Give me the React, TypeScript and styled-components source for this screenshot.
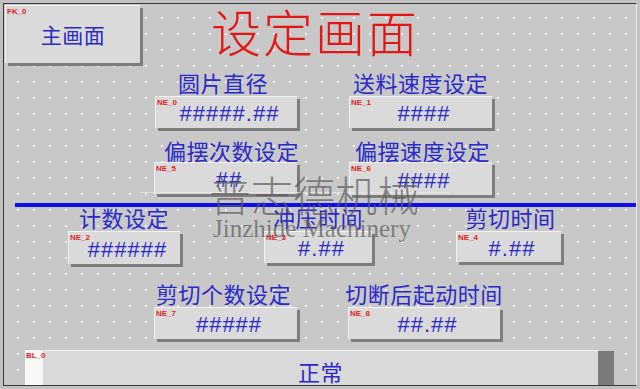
import { createGlobalStyle, styled } from 'styled-components'

const GlobalStyle = createGlobalStyle`
  html, body {
    margin: 0;
    padding: 0;
    background: #bdbdbd;
  }
  body {
    font-family: 'Noto Sans CJK SC', 'Noto Sans', sans-serif;
  }
`

const BLUE = '#2a2ac8'

const Frame = styled.div`
  width: 640px;
  height: 389px;
  box-sizing: border-box;
  padding: 3px;
  background: #c2c2c2;
`

// HMI editor canvas with its dotted design grid
const Screen = styled.div`
  position: relative;
  display: flex;
  flex-direction: column;
  width: 100%;
  height: 100%;
  box-sizing: border-box;
  padding-top: 1px;
  border-left: 1px solid #3a3a3a;
  border-top: 1px solid #3a3a3a;
  border-bottom: 1px solid #3a3a3a;
  border-right: 1px solid #ececec;
  background-color: #c8c8c8;
  background-image: radial-gradient(circle, rgba(242, 242, 242, 0.95) 0.8px, transparent 1.4px);
  background-size: 16px 16px;
  background-position: -10px -10px;
`

const Header = styled.div`
  display: flex;
  align-items: flex-start;
  height: 58px;
  padding-left: 1px;
`

const Key = styled.div<{ $w: number; $h: number }>`
  position: relative;
  flex: none;
  width: ${({ $w }) => $w}px;
  height: ${({ $h }) => $h}px;
  box-sizing: border-box;
  background: #dadada;
  border-top: 1px solid #f2f2f2;
  border-left: 1px solid #f2f2f2;
  box-shadow: 3px 3px 0 #7d7d7d;
  display: flex;
  align-items: center;
  justify-content: center;
`

const Tag = styled.span`
  position: absolute;
  left: 1px;
  top: 2px;
  font-family: 'Liberation Sans', Arial, sans-serif;
  font-size: 8px;
  font-weight: 700;
  line-height: 1;
  color: #e41e1e;
`

const Caption = styled.span<{ $size?: number }>`
  font-size: ${({ $size }) => $size ?? 22}px;
  line-height: 1;
  color: ${BLUE};
  letter-spacing: 0.5px;
  white-space: nowrap;
`

const Title = styled.h1`
  margin: -1px 0 0 71px;
  font-size: 50px;
  line-height: 52px;
  font-weight: 300;
  color: #e31616;
  letter-spacing: 2px;
  white-space: nowrap;
`

const Row = styled.div<{ $top: number; $left: number; $gap: number }>`
  display: flex;
  align-items: flex-start;
  margin-top: ${({ $top }) => $top}px;
  padding-left: ${({ $left }) => $left}px;
  gap: ${({ $gap }) => $gap}px;
`

const FieldGroup = styled.div<{ $w: number }>`
  display: flex;
  flex-direction: column;
  align-items: center;
  width: ${({ $w }) => $w}px;
`

const Label = styled.div<{ $gap: number; $shift: number }>`
  font-size: 22px;
  line-height: 22px;
  color: ${BLUE};
  letter-spacing: 0.5px;
  white-space: nowrap;
  margin-bottom: ${({ $gap }) => $gap}px;
  margin-left: ${({ $shift }) => $shift * 2}px;
`

const Value = styled.span`
  font-family: 'Liberation Sans', Arial, sans-serif;
  font-size: 22px;
  line-height: 1;
  color: ${BLUE};
  padding: 3px 0 0 6px;
  letter-spacing: 1px;
`

const Divider = styled.div`
  flex: none;
  height: 4px;
  margin: 8px 0 0 11px;
  background: #1010e6;
`

const StatusBar = styled.div`
  display: flex;
  width: 589px;
  height: 35px;
  margin: 11px 0 0 21px;
`

const StatusCap = styled.div`
  position: relative;
  width: 18px;
  background: #f7f7f7;
`

const StatusFace = styled.div`
  flex: 1;
  display: flex;
  align-items: flex-end;
  justify-content: center;
  padding-bottom: 3px;
  background: #d9d9d9;
  border-top: 1px solid #efefef;
`

const StatusEnd = styled.div`
  width: 16px;
  margin-top: 1px;
  background: #7b7b7b;
`

// logo watermark laid over the screen
const Watermark = styled.div`
  position: absolute;
  left: 136px;
  top: 169px;
  width: 310px;
  display: flex;
  flex-direction: column;
  pointer-events: none;
  color: rgba(92, 92, 92, 0.72);
`

const WatermarkCn = styled.div`
  box-sizing: border-box;
  padding-left: 38px;
  font-size: 42px;
  line-height: 42px;
  font-weight: 300;
  text-align: center;
  white-space: nowrap;
  background: linear-gradient(rgba(235, 235, 235, 0.7), rgba(235, 235, 235, 0.7)) 0 19px / 100% 1px no-repeat;
`

const WatermarkEn = styled.div`
  box-sizing: border-box;
  padding-left: 34px;
  margin-top: 1px;
  font-family: 'Liberation Serif', 'Times New Roman', serif;
  font-size: 25px;
  line-height: 25px;
  text-align: center;
  white-space: nowrap;
`

type Field = { id: string; label: string; w: number; h: number; value: string; gap?: number; shift?: number }

const rows: { top: number; left: number; gap: number; fields: Field[] }[] = [
  {
    top: 8,
    left: 151,
    gap: 52,
    fields: [
      { id: 'NE_0', label: '圆片直径', w: 142, h: 32, value: '#####.##', shift: -3 },
      { id: 'NE_1', label: '送料速度设定', w: 143, h: 32, value: '####' },
    ],
  },
  {
    top: 11,
    left: 150,
    gap: 52,
    fields: [
      { id: 'NE_5', label: '偏摆次数设定', w: 143, h: 32, value: '##', gap: 1, shift: 6 },
      { id: 'NE_6', label: '偏摆速度设定', w: 143, h: 33, value: '####', gap: 1, shift: 2 },
    ],
  },
  {
    top: -1,
    left: 64,
    gap: 84,
    fields: [
      { id: 'NE_2', label: '计数设定', w: 112, h: 33, value: '######' },
      { id: 'NE_3', label: '冲压时间', w: 108, h: 32, value: '#.##' },
      { id: 'NE_4', label: '剪切时间', w: 105, h: 31, value: '#.##', shift: 2 },
    ],
  },
  {
    top: 18,
    left: 150,
    gap: 51,
    fields: [
      { id: 'NE_7', label: '剪切个数设定', w: 143, h: 32, value: '#####', shift: -2 },
      { id: 'NE_8', label: '切断后起动时间', w: 152, h: 32, value: '##.##' },
    ],
  },
]

function FieldRow({ top, left, gap, fields }: (typeof rows)[number]) {
  return (
    <Row $top={top} $left={left} $gap={gap}>
      {fields.map((f) => (
        <FieldGroup key={f.id} $w={f.w}>
          <Label $gap={f.gap ?? 3} $shift={f.shift ?? 0}>
            {f.label}
          </Label>
          <Key $w={f.w} $h={f.h}>
            <Tag>{f.id}</Tag>
            <Value>{f.value}</Value>
          </Key>
        </FieldGroup>
      ))}
    </Row>
  )
}

export default function App() {
  return (
    <>
      <GlobalStyle />
      <Frame>
        <Screen>
          <Header>
            <Key $w={135} $h={58}>
              <Tag>FK_0</Tag>
              <Caption $size={21}>主画面</Caption>
            </Key>
            <Title>设定画面</Title>
          </Header>

          {rows.slice(0, 2).map((r, i) => (
            <FieldRow key={i} {...r} />
          ))}
          <Divider />
          {rows.slice(2).map((r, i) => (
            <FieldRow key={i + 2} {...r} />
          ))}

          <StatusBar>
            <StatusCap>
              <Tag>BL_0</Tag>
            </StatusCap>
            <StatusFace>
              <Caption>正常</Caption>
            </StatusFace>
            <StatusEnd />
          </StatusBar>

          <Watermark>
            <WatermarkCn>普志德机械</WatermarkCn>
            <WatermarkEn>Jinzhide Machinery</WatermarkEn>
          </Watermark>
        </Screen>
      </Frame>
    </>
  )
}
